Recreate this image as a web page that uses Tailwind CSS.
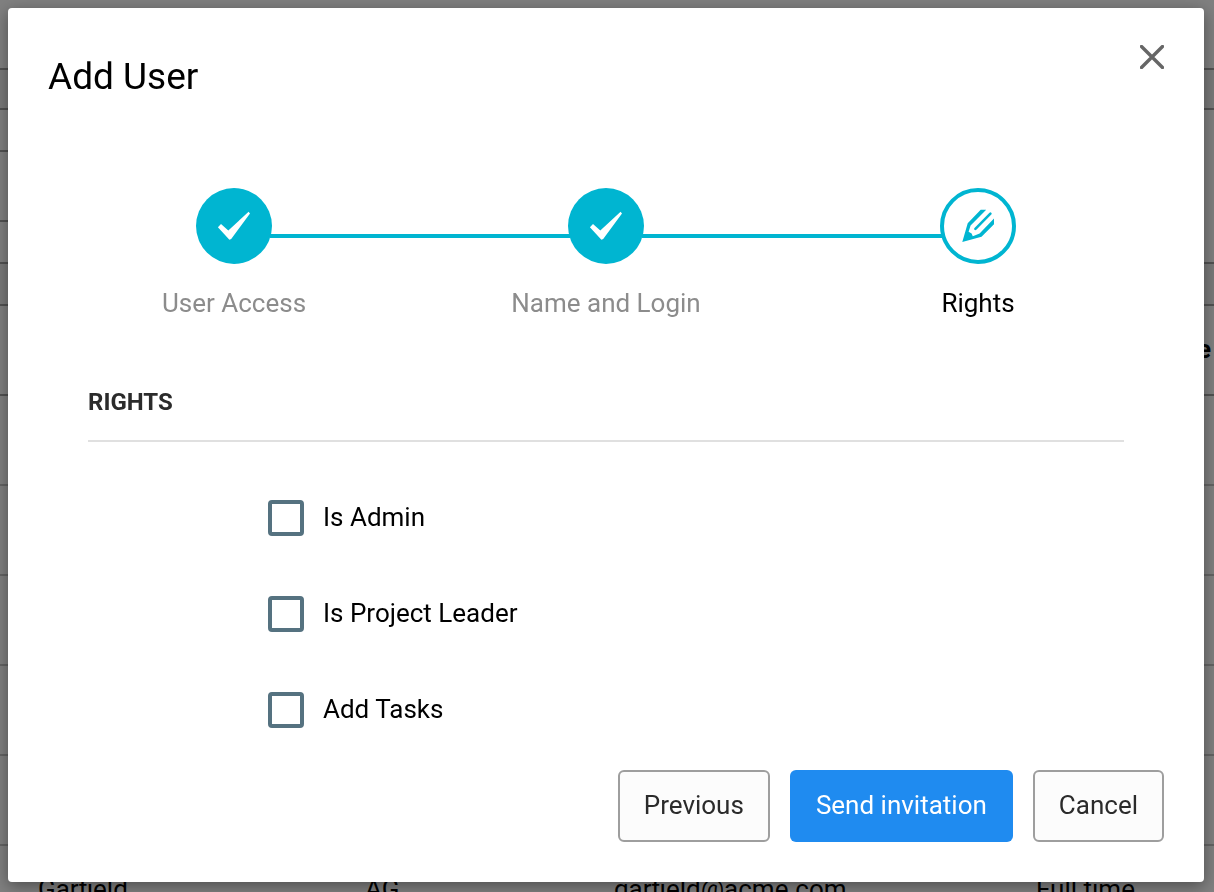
<!DOCTYPE html>
<html lang="en">
<head>
<meta charset="utf-8">
<meta name="viewport" content="width=device-width, initial-scale=1">
<title>Add User</title>
<script src="https://cdn.jsdelivr.net/npm/@tailwindcss/browser@4"></script>
</head>
<body class="h-screen overflow-hidden bg-[#808080] font-[Roboto,sans-serif] text-[26px] leading-8 text-black">
  <!-- User list behind the dialog -->
  <main class="flex h-screen flex-col overflow-hidden" aria-hidden="true">
    <div class="h-[70px] shrink-0 border-b-2 border-[#525252]"></div>
    <div class="h-10 shrink-0 border-b-2 border-[#525252] bg-[#7a7a7a]"></div>
    <div class="h-[154px] shrink-0 border-b-2 border-[#525252]">
      <div class="h-[42px] w-1/2 border-b-2 border-[#525252]"></div>
      <div class="h-[70px] w-1/2 border-b-2 border-[#525252]"></div>
    </div>
    <div class="h-[42px] shrink-0 border-b-2 border-[#525252] bg-[#7a7a7a]"></div>
    <div class="flex h-[90px] shrink-0 items-center justify-end border-b-2 border-[#525252] pr-[3px] pb-0.5 font-bold">Role</div>
    <div class="h-[90px] shrink-0 border-b-2 border-[#646464]"></div>
    <div class="h-[90px] shrink-0 border-b-2 border-[#646464]"></div>
    <div class="h-[90px] shrink-0 border-b-2 border-[#646464]"></div>
    <div class="h-[90px] shrink-0 border-b-2 border-[#646464]"></div>
    <div class="h-[90px] shrink-0 border-b-2 border-[#646464]"></div>
    <div class="grid h-[90px] shrink-0 grid-cols-[327fr_249fr_422fr_178fr] items-center pb-1 pl-[38px]">
      <span>Garfield</span><span>AG</span><span>garfield@acme.com</span><span>Full time</span>
    </div>
  </main>

  <div class="fixed inset-0 pt-2 pr-2.5 pb-2.5 pl-2">
    <section role="dialog" aria-modal="true" aria-labelledby="title" class="rounded-[4px] bg-white px-10 pt-8 pb-10 shadow-[0_4px_16px_rgba(0,0,0,0.4)]">
      <header class="flex items-start justify-between">
        <h1 id="title" class="pt-3.5 text-[37px] leading-[46px]">Add User</h1>
        <button type="button" aria-label="Close" class="-mr-1 p-1 pt-[5px]">
          <svg class="size-6" viewBox="0 0 24 24" fill="none" stroke="#666" stroke-width="3.4" stroke-linecap="round"><path d="M1.5 1.5l21 21M22.5 1.5l-21 21"/></svg>
        </button>
      </header>

      <ol class="mt-[88px] grid grid-cols-3 text-center">
        <li class="text-[#8c8c8c]">
          <div class="flex items-start">
            <span class="-mr-0.5 flex-1"></span>
            <span class="flex size-[76px] items-center justify-center rounded-full bg-[#00b5d1]">
              <svg class="size-9" viewBox="0 0 36 36" fill="#fff"><path d="M1.9 19.2L5 16.1 12.3 22.6 32.6 3.8 34 5.4 15.2 31 13.4 31.8Z"/></svg>
            </span>
            <span class="mt-[46px] -ml-0.5 h-1 flex-1 bg-[#00b5d1]"></span>
          </div>
          <p class="mt-[23px]">User Access</p>
        </li>
        <li class="text-[#8c8c8c]">
          <div class="flex items-start">
            <span class="mt-[46px] -mr-0.5 h-1 flex-1 bg-[#00b5d1]"></span>
            <span class="flex size-[76px] items-center justify-center rounded-full bg-[#00b5d1]">
              <svg class="size-9" viewBox="0 0 36 36" fill="#fff"><path d="M1.9 19.2L5 16.1 12.3 22.6 32.6 3.8 34 5.4 15.2 31 13.4 31.8Z"/></svg>
            </span>
            <span class="mt-[46px] -ml-0.5 h-1 flex-1 bg-[#00b5d1]"></span>
          </div>
          <p class="mt-[23px]">Name and Login</p>
        </li>
        <li aria-current="step">
          <div class="flex items-start">
            <span class="mt-[46px] -mr-0.5 h-1 flex-1 bg-[#00b5d1]"></span>
            <span class="flex size-[76px] items-center justify-center rounded-full border-4 border-[#00b5d1] bg-white">
              <svg class="size-9" viewBox="0 0 36 36"><path fill="#00b5d1" d="M2.3 33.9L7.7 15.3 20.7 1.8H26.2L10.6 17.6 8.6 23.8 11.6 25.6 12.8 28.2 19.6 25.6 34 10.4V16.2L21.5 28.7Z"/><path fill="none" stroke="#00b5d1" stroke-width="2.6" stroke-linecap="round" d="M15.4 20.8L30.4 5.6"/></svg>
            </span>
            <span class="-ml-0.5 flex-1"></span>
          </div>
          <p class="mt-[23px]">Rights</p>
        </li>
      </ol>

      <form class="mt-[66px]">
        <fieldset class="px-10">
          <legend class="w-full border-b-2 border-[#e0e0e0] pt-px pb-[22px] text-2xl font-bold text-[#2b2b2b]">RIGHTS</legend>
          <div class="flex flex-col gap-[60px] pt-[58px] pl-[180px]">
            <label class="flex h-9 items-center gap-[19px]"><input type="checkbox" class="size-9 appearance-none rounded-[4px] border-4 border-[#557280] checked:bg-[#557280]"><span class="-mt-0.5">Is Admin</span></label>
            <label class="flex h-9 items-center gap-[19px]"><input type="checkbox" class="size-9 appearance-none rounded-[4px] border-4 border-[#557280] checked:bg-[#557280]"><span class="-mt-0.5">Is Project Leader</span></label>
            <label class="flex h-9 items-center gap-[19px]"><input type="checkbox" class="size-9 appearance-none rounded-[4px] border-4 border-[#557280] checked:bg-[#557280]"><span class="-mt-0.5">Add Tasks</span></label>
          </div>
        </fieldset>
        <div class="mt-[42px] flex justify-end gap-5">
          <button type="button" class="h-[72px] rounded-md border-2 border-[#9e9e9e] bg-[#fcfcfc] px-6 pb-0.5 text-[#2b2b2b]">Previous</button>
          <button type="submit" class="h-[72px] rounded-md bg-[#1f8bf0] px-[26px] pb-0.5 text-white">Send invitation</button>
          <button type="button" class="h-[72px] rounded-md border-2 border-[#9e9e9e] bg-[#fcfcfc] px-6 pb-0.5 text-[#2b2b2b]">Cancel</button>
        </div>
      </form>
    </section>
  </div>
</body>
</html>
